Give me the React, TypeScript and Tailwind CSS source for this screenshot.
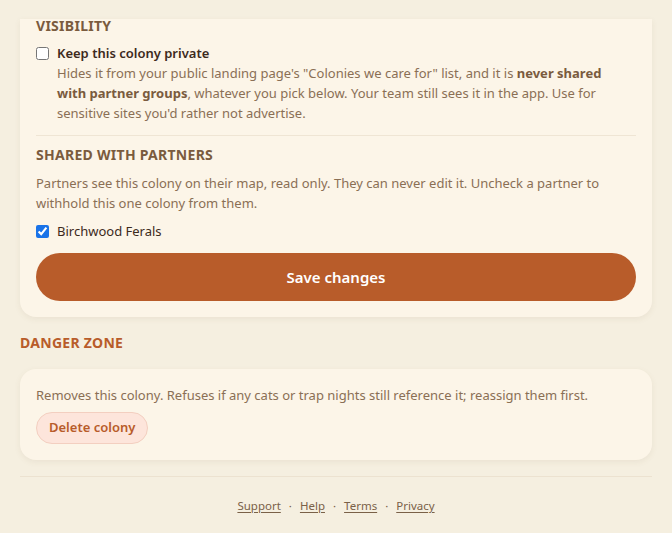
const font = { fontFamily: '"Noto Sans", "Open Sans", sans-serif' }

function SectionHeading({ children, className = '' }: { children: React.ReactNode; className?: string }) {
  return (
    <h3 className={`text-[14px] font-bold uppercase tracking-[0.02em] ${className}`}>{children}</h3>
  )
}

export default function App() {
  const links = ['Support', 'Help', 'Terms', 'Privacy']

  return (
    <div className="min-h-[533px] bg-[#f5efe0] text-[#7a6148]" style={font}>
      <div className="px-5 pt-5">
        <div className="rounded-b-2xl bg-[#fcf5e8] px-4 pb-4 shadow-[0_2px_6px_rgba(120,90,50,0.08)]">
          <SectionHeading className="-mt-[1px] leading-[14px] text-[#7a5b3e]">Visibility</SectionHeading>

          <label className="mt-[10px] flex items-start gap-2">
            <input type="checkbox" className="mt-[4px] h-[13px] w-[13px] shrink-0 accent-[#1a73e8]" />
            <div>
              <div className="text-[13px] font-semibold leading-5 text-[#3d2a1c]">Keep this colony private</div>
              <p className="max-w-[560px] text-[13px] leading-5 text-[#8a6f55]">
                Hides it from your public landing page's "Colonies we care for" list, and it is{' '}
                <b className="font-bold text-[#7a5b3e]">never shared with partner groups</b>, whatever you pick below. Your
                team still sees it in the app. Use for sensitive sites you'd rather not advertise.
              </p>
            </div>
          </label>

          <div className="mt-3 border-t border-[#efe5d4]" />

          <SectionHeading className="mt-[8px] text-[#7a5b3e]">Shared with partners</SectionHeading>
          <p className="mt-[8px] text-[13px] leading-5 text-[#8a6f55]">
            Partners see this colony on their map, read only. They can never edit it. Uncheck a partner to withhold this one
            colony from them.
          </p>
          <label className="mt-2 flex items-center gap-2">
            <input type="checkbox" defaultChecked className="h-[13px] w-[13px] accent-[#1a73e8]" />
            <span className="text-[13px] leading-5 text-[#3d2a1c]">Birchwood Ferals</span>
          </label>

          <button className="mt-3 h-12 w-full rounded-full bg-[#b85c2a] text-[15px] font-semibold text-white">
            Save changes
          </button>
        </div>

        <SectionHeading className="mt-[15px] text-[#b85c2a]">Danger zone</SectionHeading>

        <div className="mt-[16px] rounded-2xl bg-[#fcf5e8] px-4 pb-4 pt-[16px] shadow-[0_2px_6px_rgba(120,90,50,0.08)]">
          <p className="text-[13px] leading-5 text-[#8a6f55]">
            Removes this colony. Refuses if any cats or trap nights still reference it; reassign them first.
          </p>
          <button className="mt-[7px] h-[32px] rounded-full border border-[#f3cfc0] bg-[#fde5db] px-3 text-[13px] font-semibold text-[#b85c2a]">
            Delete colony
          </button>
        </div>

        <div className="mt-4 border-t border-[#ece2d0]" />
        <div className="flex items-center justify-center gap-[8px] pt-[20px] text-[11.5px] text-[#7a6148]">
          {links.map((l, i) => (
            <span key={l} className="flex items-center gap-[8px]">
              {i > 0 && <span>·</span>}
              <a href="#" className="underline underline-offset-2">{l}</a>
            </span>
          ))}
        </div>
      </div>
    </div>
  )
}
